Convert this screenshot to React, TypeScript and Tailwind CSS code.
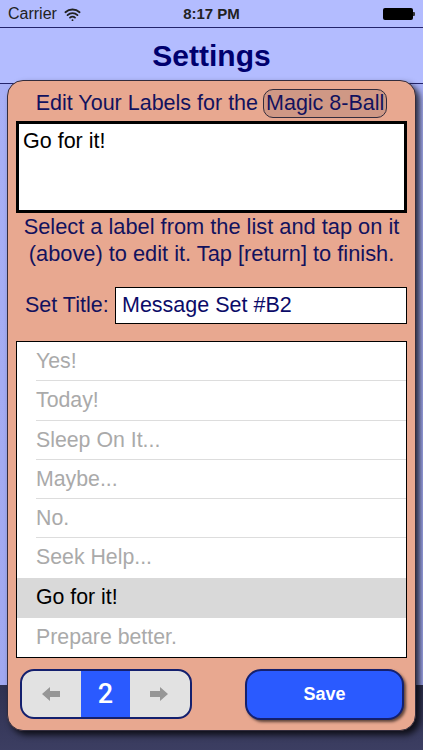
import { Wifi } from 'lucide-react'

const labels = [
  'Yes!',
  'Today!',
  'Sleep On It...',
  'Maybe...',
  'No.',
  'Seek Help...',
  'Go for it!',
  'Prepare better.',
]

const Arrow = ({ flip }: { flip?: boolean }) => (
  <svg width="18" height="14" viewBox="0 0 18 14" className={flip ? 'rotate-180' : ''}>
    <path d="M0 7 L8 0 V4 H18 V10 H8 V14 Z" fill="#969696" />
  </svg>
)

export default function App() {
  return (
    <div className="flex h-[750px] w-[423px] flex-col overflow-hidden bg-[#333655] font-['Liberation_Sans',sans-serif] text-[#12125e]">
      <div className="h-[28px] shrink-0 border-b border-[#23246b] bg-[#b3bcff]">
        <div className="relative flex h-[27px] items-center px-2 pt-[1px] text-[16px] text-[#222]">
          <span>Carrier</span>
          <Wifi size={17} strokeWidth={2.6} className="ml-[7px]" />
          <span className="absolute left-0 right-0 text-center text-[15px] font-bold">8:17 PM</span>
          <div className="ml-auto flex items-center">
            <div className="h-[12px] w-[30px] rounded-[2px] bg-black" />
            <div className="h-[4px] w-[2px] rounded-r-[1px] bg-[#333]" />
          </div>
        </div>
      </div>
      <div className="flex h-[56px] shrink-0 items-center justify-center border-b border-[#23246b] bg-[#b3bcff]">
        <h1 className="text-[30px] font-bold leading-none text-[#00006e]">Settings</h1>
      </div>
      <div className="flex-1 bg-[linear-gradient(#a8b0f6_0%,#a0a8f0_90.2%,#2f3150_90.2%,#3c3e62_100%)] px-[7px]">
        <div className="mt-[-4px] flex h-[651px] flex-col rounded-[16px] border border-[#332c3c] bg-[#e8a890] px-[8px] shadow-[4px_4px_6px_rgba(0,0,0,0.75)]">
          <div className="mt-[7px] flex h-[30px] items-center justify-center text-[21.5px]">
            <span>Edit Your Labels for the</span>
            <span className="ml-[5px] rounded-[10px] border border-[#332c3c] bg-[#cf9885] px-[2px] leading-[27px]">Magic 8-Ball</span>
          </div>
          <div className="mt-[3px] h-[92px] shrink-0 border-[3px] border-black bg-white px-[4px] pt-[5px] text-[21.5px] leading-[24px] text-black">
            Go for it!
          </div>
          <p className="whitespace-nowrap text-center text-[21.8px] leading-[27px]">
            Select a label from the list and tap on it
            <br />
            (above) to edit it. Tap [return] to finish.
          </p>
          <div className="mt-[20px] flex h-[37px] items-center">
            <span className="ml-[9px] w-[90px] shrink-0 text-[21.5px]">Set Title:</span>
            <div className="flex h-[37px] flex-1 items-center border border-black bg-white pl-[6px] text-[21.5px] text-[#0b0b68]">Message Set #B2</div>
          </div>
          <div className="mt-[17px] h-[317px] shrink-0 overflow-hidden border border-black bg-white">
            {labels.map((label, i) => (
              <div
                key={label}
                className={i === 6 ? 'h-[40px] bg-[#d9d9d9] pl-[19px] text-[21.3px] leading-[39px] text-black' : 'h-[39.3px] pl-[19px] text-[21.3px] leading-[38px] text-[#aaaaaa]'}
              >
                <div className={i < 5 ? 'h-full border-b border-[#dddddd]' : ''}>{label}</div>
              </div>
            ))}
          </div>
          <div className="mt-[11px] flex items-start justify-between pl-[4px] pr-[3px]">
            <div className="flex h-[50px] w-[172px] overflow-hidden rounded-[14px] border-[2px] border-[#14206e] bg-[#e2e2e2]">
              <div className="flex w-[59px] items-center justify-center pr-[2px]"><Arrow /></div>
              <div className="flex w-[49px] items-center justify-center bg-[#2a5aff] font-['Roboto',sans-serif] text-[27px] font-medium text-white">2</div>
              <div className="flex flex-1 items-center justify-center pr-[2px]"><Arrow flip /></div>
            </div>
            <div className="flex h-[51px] w-[159px] items-center justify-center rounded-[16px] border-[2px] border-[#14206e] bg-[#2a5aff] text-[18px] font-bold text-white shadow-[2px_2px_3px_rgba(0,0,0,0.6)]">
              Save
            </div>
          </div>
        </div>
      </div>
    </div>
  )
}
